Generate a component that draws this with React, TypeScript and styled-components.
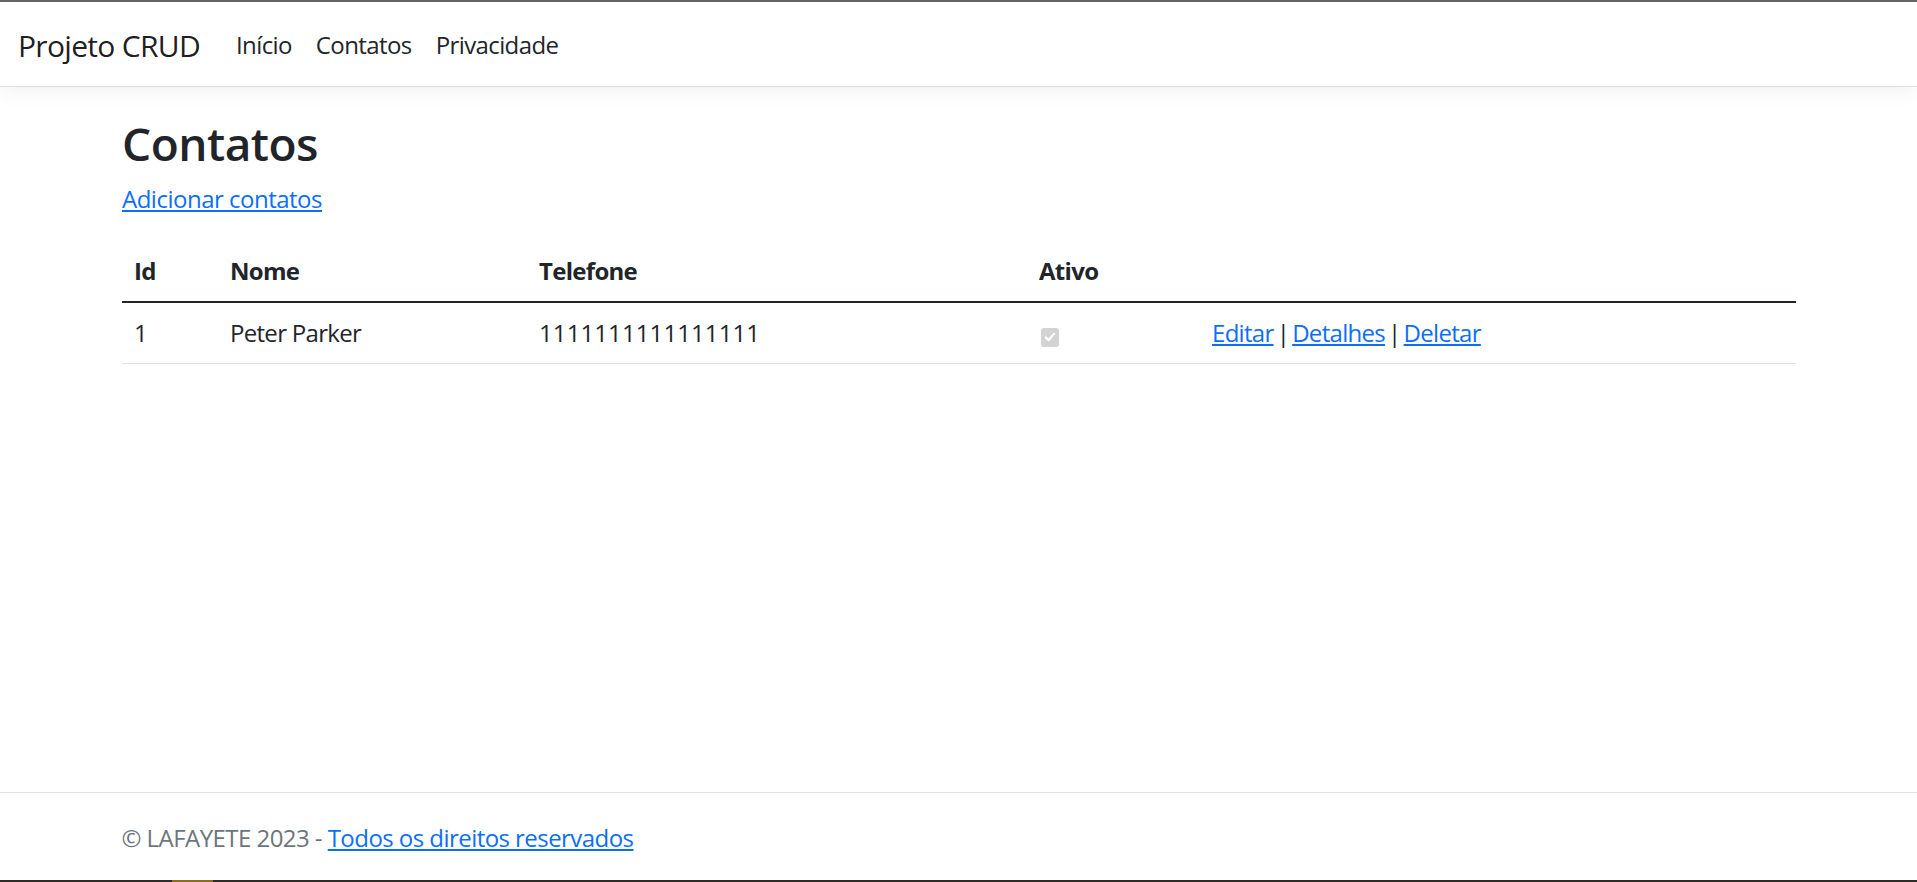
import React from 'react';
import styled, {createGlobalStyle} from 'styled-components';

const GlobalStyle = createGlobalStyle`
    html, body {
        margin: 0;
        padding: 0;
        height: 100%;
        overflow: hidden;
    }

    body {
        font-family: 'Segoe UI', 'Open Sans', 'Noto Sans', sans-serif;
        font-size: 24px;
        line-height: 1.5;
        color: #212529;
        background: #fff;
    }

    a {
        color: #0d6efd;
    }
`;

const Page = styled.div`
    display: flex;
    flex-direction: column;
    min-height: 100vh;
`;

const BrowserEdge = styled.div`
    height: 2px;
    background: #656565;
`;

const Navbar = styled.header`
    display: flex;
    align-items: center;
    padding: 13px 18px 11px;
    background: #fff;
    border-bottom: 1px solid #dee2e6;
    box-shadow: 0 6px 18px rgba(0, 0, 0, 0.05);
    position: relative;
    z-index: 1;
`;

const Brand = styled.a`
    font-size: 30px;
    line-height: 45px;
    padding: 7.5px 0;
    margin-right: 24px;
    color: rgba(0, 0, 0, 0.9);
    text-decoration: none;
    letter-spacing: -0.7px;
`;

const NavList = styled.ul`
    display: flex;
    list-style: none;
    margin: 0;
    padding: 0;
`;

const NavLink = styled.a`
    display: block;
    padding: 12px;
    color: #212529;
    text-decoration: none;
    letter-spacing: -0.6px;
`;

const Main = styled.main`
    flex: 1;
    width: 1674px;
    margin: 0 auto;
    padding: 29px 0 24px 1px;
    letter-spacing: -0.7px;
`;

const Title = styled.h1`
    margin: 0 0 10px;
    font-size: 46px;
    font-weight: 600;
    line-height: 1.2;
    letter-spacing: -0.5px;
`;

const Lead = styled.p`
    margin: 0 0 24px;
    letter-spacing: -0.5px;
`;

const Table = styled.table`
    width: 100%;
    border-collapse: collapse;
    table-layout: fixed;
`;

const HeadCell = styled.th`
    padding: 12px;
    text-align: left;
    font-weight: 700;
    border-bottom: 2px solid #212529;
`;

const Cell = styled.td<{$digits?: boolean; $tight?: boolean}>`
    padding: 12px;
    border-bottom: 1px solid #dee2e6;
    vertical-align: top;
    letter-spacing: ${(p) => (p.$digits ? '0.1px' : 'inherit')};
    word-spacing: ${(p) => (p.$tight ? '-2.5px' : 'normal')};
`;

const Separator = styled.span`
    color: #212529;
`;

const CheckBox = styled.span`
    display: inline-flex;
    align-items: center;
    justify-content: center;
    width: 18px;
    height: 19px;
    border-radius: 3px;
    background: #d3d3d3;
    vertical-align: -1px;
    margin-left: 2px;
`;

const Footer = styled.footer`
    border-top: 1px solid #dee2e6;
    color: #6c757d;
    font-size: 24px;
    line-height: 84px;
    padding-top: 3px;
    white-space: nowrap;
`;

const FooterInner = styled.div`
    width: 1674px;
    margin: 0 auto;
    letter-spacing: -0.55px;
`;

const TaskbarEdge = styled.div`
    height: 2px;
    background: linear-gradient(
        to right,
        #2f2b26 0,
        #2f2b26 172px,
        #8a6d1f 172px,
        #8a6d1f 213px,
        #2f2b26 213px
    );
`;

type Contact = {
    id: number;
    nome: string;
    telefone: string;
    ativo: boolean;
};

const contacts: Contact[] = [
    {id: 1, nome: 'Peter Parker', telefone: '1111111111111111', ativo: true},
];

const columns = [96, 309, 500, 173, 596];

const App: React.FC = () => {
    return (
        <Page>
            <GlobalStyle/>
            <BrowserEdge/>
            <Navbar>
                <Brand href='#'>Projeto CRUD</Brand>
                <NavList>
                    <li><NavLink href='#'>Início</NavLink></li>
                    <li><NavLink href='#'>Contatos</NavLink></li>
                    <li><NavLink href='#'>Privacidade</NavLink></li>
                </NavList>
            </Navbar>

            <Main>
                <Title>Contatos</Title>
                <Lead>
                    <a href='#'>Adicionar contatos</a>
                </Lead>
                <Table>
                    <colgroup>
                        {columns.map((w, i) => (
                            <col
                                key={i}
                                style={{width: w}}
                            />
                        ))}
                    </colgroup>
                    <thead>
                        <tr>
                            <HeadCell>Id</HeadCell>
                            <HeadCell>Nome</HeadCell>
                            <HeadCell>Telefone</HeadCell>
                            <HeadCell>Ativo</HeadCell>
                            <HeadCell/>
                        </tr>
                    </thead>
                    <tbody>
                        {contacts.map((c) => (
                            <tr key={c.id}>
                                <Cell>{c.id}</Cell>
                                <Cell>{c.nome}</Cell>
                                <Cell $digits={true}>{c.telefone}</Cell>
                                <Cell>
                                    {c.ativo && (
                                        <CheckBox role='checkbox' aria-checked='true' aria-disabled='true'>
                                            <svg width='12' height='12' viewBox='0 0 12 12'>
                                                <path
                                                    d='M1.8 6.4 L4.6 9.1 L10.2 2.8'
                                                    fill='none'
                                                    stroke='#fff'
                                                    strokeWidth='2.2'
                                                    strokeLinecap='round'
                                                    strokeLinejoin='round'
                                                />
                                            </svg>
                                        </CheckBox>
                                    )}
                                </Cell>
                                <Cell $tight={true}>
                                    <a href='#'>Editar</a> <Separator>|</Separator> <a href='#'>Detalhes</a> <Separator>|</Separator> <a href='#'>Deletar</a>
                                </Cell>
                            </tr>
                        ))}
                    </tbody>
                </Table>
            </Main>

            <Footer>
                <FooterInner>
                    © LAFAYETE 2023 - <a href='#'>Todos os direitos reservados</a>
                </FooterInner>
            </Footer>
            <TaskbarEdge/>
        </Page>
    );
};

export default App;
